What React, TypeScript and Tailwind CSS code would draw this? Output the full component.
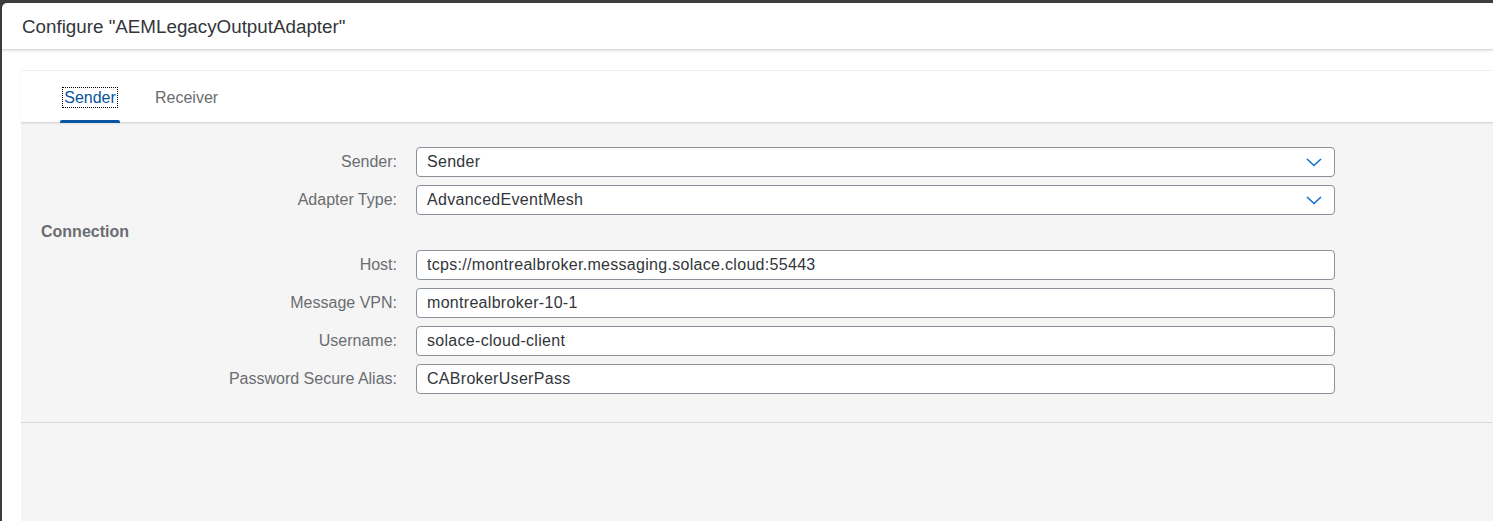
import React from "react";

const font = { fontFamily: '"Liberation Sans", Arial, sans-serif' };

function Chevron() {
  return (
    <svg width="16" height="9" viewBox="0 0 16 9" className="shrink-0">
      <polyline points="1,1 8,7.5 15,1" fill="none" stroke="#0a6ed1" strokeWidth="1.5" />
    </svg>
  );
}

function Field({ label, value, select }: { label: string; value: string; select?: boolean }) {
  return (
    <>
      <div className="flex items-center justify-end h-[30px] text-[16px] text-[#6a6d70]">{label}</div>
      <div className="h-[30px] flex items-center border border-[#89919a] rounded-[4px] bg-white pl-[10px] pr-[12px] text-[16px] text-[#32363a]">
        <span className="flex-1 tracking-[0.3px]">{value}</span>
        {select && <Chevron />}
      </div>
    </>
  );
}

export default function App() {
  return (
    <div style={font} className="w-[1493px] h-[521px] bg-[#3d3d3d] pt-[3px] pl-[2px] overflow-hidden">
      <div className="bg-white rounded-tl-[5px] h-full flex flex-col">
        <div className="h-[47px] shrink-0 flex items-center pl-[20px] pt-[3px] text-[18.8px] text-[#32363a] border-b border-[#dcdcdc] shadow-[0_1px_2px_rgba(0,0,0,0.12)] relative z-10">
          Configure "AEMLegacyOutputAdapter"
        </div>
        <div className="flex-1 flex flex-col pl-[19px] pt-[20px]">
          <div className="flex-1 flex flex-col border-t border-[#f0f0f0]">
            <div className="h-[52px] shrink-0 flex items-stretch border-b border-[#d9d9d9] shadow-[0_1px_2px_rgba(0,0,0,0.08)] relative z-10 bg-white">
              <div className="ml-[39px] w-[60px] relative flex items-center justify-center pt-[2px]">
                <span className="text-[16px] text-[#0854a0] border border-dotted border-black px-[1px] leading-[19px]">Sender</span>
                <div className="absolute left-0 right-0 bottom-[-1px] h-[3px] bg-[#0854a0] rounded-t-[2px]" />
              </div>
              <div className="ml-[31px] px-[4px] pt-[2px] flex items-center text-[16px] text-[#6a6d70]">Receiver</div>
            </div>
            <div className="flex-1 bg-[#f5f5f5] flex flex-col">
              <div className="pt-[24px] pr-[158px] grid grid-cols-[376px_1fr] gap-x-[19px] gap-y-[8px]">
                <Field label="Sender:" value="Sender" select />
                <Field label="Adapter Type:" value="AdvancedEventMesh" select />
              </div>
              <div className="h-[35px] pt-[6px] pl-[20px] text-[16px] font-bold text-[#6a6d70] leading-[22px]">Connection</div>
              <div className="pr-[158px] grid grid-cols-[376px_1fr] gap-x-[19px] gap-y-[8px]">
                <Field label="Host:" value="tcps://montrealbroker.messaging.solace.cloud:55443" />
                <Field label="Message VPN:" value="montrealbroker-10-1" />
                <Field label="Username:" value="solace-cloud-client" />
                <Field label="Password Secure Alias:" value="CABrokerUserPass" />
              </div>
              <div className="mt-[28px] border-t border-[#d9d9d9]" />
            </div>
          </div>
        </div>
      </div>
    </div>
  );
}
